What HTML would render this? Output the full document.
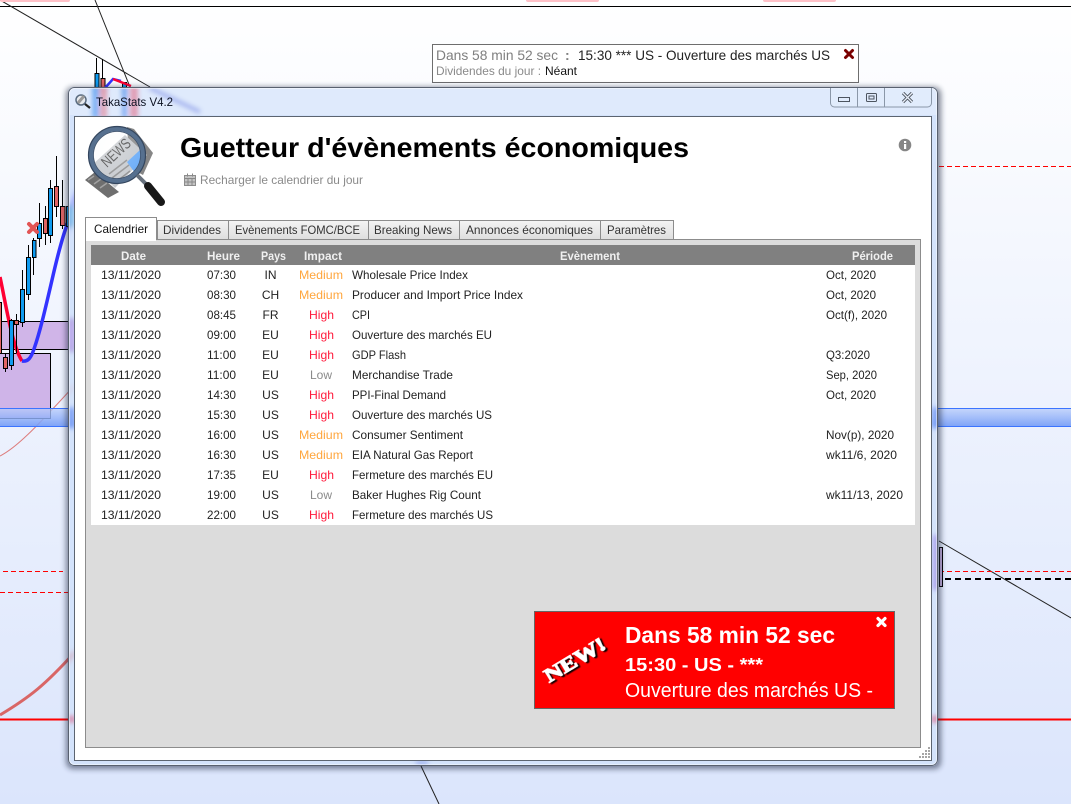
<!DOCTYPE html>
<html><head><meta charset="utf-8"><title>TakaStats V4.2</title>
<style>
html,body{margin:0;padding:0;width:1071px;height:804px;overflow:hidden;background:#fff}
svg{display:block}
text{font-family:"Liberation Sans",sans-serif;font-size:12px;fill:#222}
.h text{fill:#f0f0f0;font-weight:bold}
.t text{fill:#333}
.p{text-anchor:middle}
.m{fill:#ffa63d !important}.g{fill:#ff1a3c !important}.l{fill:#8a8a8a !important}
</style></head><body>
<svg width="1071" height="804" viewBox="0 0 1071 804" xmlns="http://www.w3.org/2000/svg">
<defs>
<linearGradient id="bg" x1="0" y1="0" x2="0" y2="1"><stop offset="0" stop-color="#ffffff"/><stop offset="1" stop-color="#dbe5fc"/></linearGradient>
<linearGradient id="band" x1="0" y1="0" x2="0" y2="1"><stop offset="0" stop-color="#b9cdfb" stop-opacity=".75"/><stop offset="1" stop-color="#6f98f6" stop-opacity=".9"/></linearGradient>
<linearGradient id="tab" x1="0" y1="0" x2="0" y2="1"><stop offset="0" stop-color="#f4f4f4"/><stop offset="1" stop-color="#dedede"/></linearGradient>
<radialGradient id="lens" cx=".4" cy=".35" r=".8"><stop offset="0" stop-color="#fff" stop-opacity=".3"/><stop offset="1" stop-color="#dfe8f0" stop-opacity=".05"/></radialGradient>
<filter id="b" x="-10%" y="-10%" width="120%" height="120%"><feGaussianBlur stdDeviation="3"/></filter>
<filter id="b2" x="-100%" y="-50%" width="300%" height="200%"><feGaussianBlur stdDeviation="2.500"/></filter>
<filter id="s" x="-5%" y="-5%" width="110%" height="110%"><feGaussianBlur stdDeviation="3"/></filter>
<filter id="n" x="-20%" y="-20%" width="140%" height="140%"><feDropShadow dx="1.500" dy="2" stdDeviation="0.400" flood-color="#000"/></filter>
<clipPath id="frame"><path fill-rule="evenodd" clip-rule="evenodd" d="M68 93a6 6 0 0 1 6-6H932a6 6 0 0 1 6 6V760a6 6 0 0 1-6 6H74a6 6 0 0 1-6-6ZM74 116V760H932V116Z"/></clipPath>
<g id="chart">
<path d="M0 6.500H1071" stroke="#000"/>
<path d="M0 0L150 87M95 0L130 87M421 766L439 804M939 541L1071 618" stroke="#222" fill="none"/>
<path d="M939 166.500H1071M939 571.500H1071M3 571.500H63M0 592.500H68" stroke="#f00" stroke-dasharray="5 3" fill="none"/>
<path d="M945 579H1071" stroke="#000" stroke-width="2" stroke-dasharray="6 4" fill="none"/>
<rect x="939.500" y="547.500" width="3" height="39" fill="#cdb5e6" stroke="#000"/>
<path d="M0 719.500H1071" stroke="#f00" stroke-width="2" fill="none"/>
<path d="M0 456C20 446 45 417 75 385" stroke="#dd7c7c" fill="none"/>
<path d="M0 715C30 697 45 685 75 652" stroke="#d96666" stroke-width="3" fill="none"/>
<rect x="-1" y="321.500" width="80" height="28" fill="#d0b5e8" stroke="#000"/>
<rect x="-1" y="353.500" width="51.500" height="65" fill="#cfb4e8" stroke="#000"/>
<rect x="0" y="408" width="1071" height="19" fill="url(#band)"/>
<path d="M0 408.500H1071M0 426.500H1071" stroke="#3b74ff" fill="none"/>
<path d="M0 277C6 305 12 345 22 361" stroke="#ff0033" stroke-width="3.500" fill="none"/>
<path d="M22 361C28 362 31 358 34 349C40 332 45 310 52 280C57 258 62 238 68 222C72 205 76 195 80 190" stroke="#3333ff" stroke-width="3.500" fill="none"/>
<path d="M22.500 270V327M28.500 245V300M33.500 238V275M39.500 203V247M45.500 206V245M50.500 180V243M56.500 156V217M62.500 180V229M5.500 353V372M11.500 319V370M16.500 314V353M96.500 58V87M102.500 59V87" stroke="#000" fill="none"/>
<g stroke="#000"><g fill="#0f9bf0"><rect x="20.500" y="289.500" width="4" height="33"/><rect x="26.500" y="257.500" width="4" height="37"/><rect x="32.500" y="240.500" width="3.500" height="17"/><rect x="37.500" y="223.500" width="4" height="15"/><rect x="48.500" y="188.500" width="4" height="47"/><rect x="66.500" y="206.500" width="6" height="20"/><rect x="9.500" y="320.500" width="4" height="45"/><rect x="95" y="73.500" width="4" height="20"/><rect x="122.500" y="82.500" width="4" height="12"/></g>
<g fill="#e16464"><rect x="43.500" y="218.500" width="4" height="15"/><rect x="54.500" y="186.500" width="4" height="20"/><rect x="60.500" y="206.500" width="4.500" height="19"/><rect x="-1" y="302.500" width="2.500" height="51"/><rect x="14.500" y="320.500" width="4" height="4"/><rect x="3.500" y="357.500" width="4" height="11"/><rect x="101" y="78.500" width="4" height="15"/></g></g>
<path d="M29 224L37 232M37 224L29 232" stroke="#e25555" stroke-width="4" stroke-linecap="round"/>
<path d="M105 88L113 79L121 81" stroke="#3333ff" stroke-width="2.500" fill="none"/><path d="M113 79L131 86" stroke="#ff0033" stroke-width="2.500" fill="none"/>
<g fill="#ffc2c8"><rect x="0" y="-3" width="70" height="5" rx="2"/><rect x="526" y="-3" width="73" height="5" rx="2"/><rect x="763" y="-3" width="73" height="5" rx="2"/></g>
</g>
</defs>

<rect width="1071" height="804" fill="url(#bg)"/>
<use href="#chart"/>

<!-- notification top -->
<rect x="432.500" y="44.500" width="426" height="38" fill="#fff" stroke="#6e6e6e"/>
<text x="436" y="60" textLength="122" lengthAdjust="spacingAndGlyphs" style="font-size:14px;fill:#7f7f7f">Dans 58 min 52 sec</text>
<text x="565" y="60" style="font-size:14px;fill:#7f7f7f;font-weight:bold">:</text>
<text x="578" y="60" textLength="252" lengthAdjust="spacingAndGlyphs" style="font-size:14px;fill:#222">15:30 *** US - Ouverture des marchés US</text>
<text x="436" y="75" textLength="105" lengthAdjust="spacingAndGlyphs" style="fill:#8a8a8a">Dividendes du jour :</text>
<text x="545" y="75" textLength="32" lengthAdjust="spacingAndGlyphs" style="fill:#111">Néant</text>
<path d="M845.500 50.500L852.500 57.500M852.500 50.500L845.500 57.500" stroke="#7a0000" stroke-width="3" stroke-linecap="round"/>

<!-- window shadow -->
<rect x="66" y="87" width="875" height="682" rx="7" fill="#1a2540" opacity=".55" filter="url(#s)"/>
<!-- glass frame -->
<rect x="68" y="87" width="870" height="679" rx="6" fill="#dfeafc"/>
<g clip-path="url(#frame)">
<g filter="url(#b)"><use href="#chart"/></g>
<rect x="60" y="80" width="890" height="700" fill="#c9dcfa" opacity=".5"/>
<rect x="60" y="88" width="890" height="27" fill="#e6effd" opacity=".6"/>
<g filter="url(#b2)" opacity=".6">
<rect x="92" y="86" width="7" height="32" fill="#3f8ff0"/><rect x="100" y="86" width="7" height="32" fill="#e27a8c"/>
<rect x="122" y="86" width="5" height="32" fill="#4a86ee"/><rect x="130" y="86" width="8" height="32" fill="#e26a85"/>
<path d="M150 88L200 112" stroke="#7d8fe6" stroke-width="4"/>
<rect x="933" y="535" width="5" height="55" fill="#8e74e6"/>
<rect x="69" y="318" width="5" height="34" fill="#a98fe6"/>
<rect x="69" y="408" width="5" height="20" fill="#4d7df2"/>
<rect x="933" y="408" width="5" height="20" fill="#4d7df2"/>
<rect x="69" y="716" width="5" height="6" fill="#d9689a"/>
<rect x="933" y="716" width="5" height="6" fill="#d9689a"/>
<rect x="416" y="760" width="12" height="6" fill="#8fa4f0"/>
</g></g>
<rect x="68.500" y="87.500" width="869" height="678" rx="6" fill="none" stroke="#59616f"/>
<rect x="69.500" y="88.500" width="867" height="676" rx="5" fill="none" stroke="#fff" stroke-opacity=".45"/>

<!-- window buttons -->
<path d="M830.500 88V103a4 4 0 0 0 4 4H927.500a4 4 0 0 0 4-4V88M857.500 88V107M884.500 88V107" fill="#e2ecfb" fill-opacity=".6" stroke="#8a97a8"/>
<rect x="838.500" y="97.500" width="11" height="4" fill="none" stroke="#4d5560"/>
<rect x="866.500" y="93.500" width="10" height="8" rx="1" fill="none" stroke="#4d5560"/><rect x="869" y="96" width="5" height="3" fill="none" stroke="#4d5560"/>
<path d="M903 93L912 102M912 93L903 102" stroke="#4d5560" stroke-width="3.200"/><path d="M903 93L912 102M912 93L903 102" stroke="#e8eef8" stroke-width="1.300"/>

<!-- title icon -->
<circle cx="81" cy="100" r="5" fill="#e8eaee" stroke="#596b80" stroke-width="1.500"/><path d="M78 103L84 96" stroke="#999" stroke-width="3"/><path d="M85 104L90 108" stroke="#222" stroke-width="2.200"/>
<text x="96" y="106" textLength="77" lengthAdjust="spacingAndGlyphs" style="fill:#0a1020">TakaStats V4.2</text>

<!-- client -->
<rect x="74.500" y="116.500" width="857" height="644" fill="#fff" stroke="#5c6470"/>

<!-- news icon -->
<path d="M85 180L95 172L119 192L108 198Z" fill="#6f6f6f"/>
<path d="M88 180L94 176M94 184L101 179M100 188L107 183" stroke="#a2a2a2" stroke-width="1.500" fill="none"/>
<path d="M127 127L134 129L153 153L143 175L130 168Z" fill="#868686"/>
<path d="M92 165L125 135L147 155L115 188Z" fill="#c6c9cd"/>
<path d="M127 162L140 150L145 157L135 173Z" fill="#62a8f8"/>
<path d="M109 174L127 160M112 178L129 165M116 182L130 171" stroke="#8c8c8c" stroke-width="1.500" fill="none"/>
<text x="0" y="0" transform="translate(107,168) rotate(-43)" textLength="34" lengthAdjust="spacingAndGlyphs" style="font-size:15px;fill:#3e3e3e">NEWS</text>
<circle cx="117" cy="155" r="26" fill="url(#lens)" stroke="#56708f" stroke-width="4.500"/>
<circle cx="117" cy="155" r="28.500" fill="none" stroke="#34465e" stroke-width="1.200"/>
<circle cx="117" cy="155" r="23.500" fill="none" stroke="#3d5069" stroke-width=".8"/>
<path d="M137 175L146 184" stroke="#66707c" stroke-width="4"/>
<path d="M148 186L161 202" stroke="#181818" stroke-width="8" stroke-linecap="round"/>

<text x="180" y="157" textLength="509" lengthAdjust="spacingAndGlyphs" style="font-size:28px;font-weight:bold;fill:#000">Guetteur d'évènements économiques</text>
<rect x="184.500" y="175.500" width="11" height="10" fill="#c4c4c4" stroke="#8c8c8c"/><path d="M184.500 178.500H195.500M188 178V186M192 178V186M185 182H195" stroke="#888" fill="none"/><path d="M187.500 173.500V176.500M192.500 173.500V176.500" stroke="#888"/>
<text x="200" y="184" textLength="163" lengthAdjust="spacingAndGlyphs" style="fill:#8a8a8a">Recharger le calendrier du jour</text>
<circle cx="905" cy="145" r="6.300" fill="#868686"/><rect x="904" y="144" width="2.200" height="5" fill="#fff"/><rect x="904" y="141" width="2.200" height="2" fill="#fff"/>

<!-- tabs -->
<rect x="85.500" y="239.500" width="835" height="508" fill="#dcdcdc" stroke="#8c8c8c"/>
<g fill="url(#tab)" stroke="#8c8c8c">
<rect x="157.500" y="220.500" width="71" height="19"/><rect x="228.500" y="220.500" width="140" height="19"/><rect x="368.500" y="220.500" width="91" height="19"/><rect x="459.500" y="220.500" width="141" height="19"/><rect x="600.500" y="220.500" width="73" height="19"/>
</g>
<path d="M85.500 240V217.500H156.500V240" fill="#fff" stroke="#8c8c8c"/>
<rect x="86" y="236" width="70" height="5" fill="#fff"/>
<text x="94" y="233" textLength="54" lengthAdjust="spacingAndGlyphs" style="fill:#111">Calendrier</text>
<g class="t">
<text x="163" y="234" textLength="58" lengthAdjust="spacingAndGlyphs">Dividendes</text>
<text x="235" y="234" textLength="125" lengthAdjust="spacingAndGlyphs">Evènements FOMC/BCE</text>
<text x="374" y="234" textLength="78" lengthAdjust="spacingAndGlyphs">Breaking News</text>
<text x="466" y="234" textLength="127" lengthAdjust="spacingAndGlyphs">Annonces économiques</text>
<text x="607" y="234" textLength="59" lengthAdjust="spacingAndGlyphs">Paramètres</text>
</g>

<!-- table -->
<rect x="91" y="245" width="824" height="280" fill="#fff"/>
<rect x="91" y="245" width="824" height="20" fill="#808080"/>
<g class="h">
<text x="121" y="260" textLength="25" lengthAdjust="spacingAndGlyphs">Date</text>
<text x="207" y="260" textLength="33" lengthAdjust="spacingAndGlyphs">Heure</text>
<text x="261" y="260" textLength="25" lengthAdjust="spacingAndGlyphs">Pays</text>
<text x="304" y="260" textLength="38" lengthAdjust="spacingAndGlyphs">Impact</text>
<text x="560" y="260" textLength="60" lengthAdjust="spacingAndGlyphs">Evènement</text>
<text x="852" y="260" textLength="41" lengthAdjust="spacingAndGlyphs">Période</text>
</g>
<g>
<g><text x="101" y="279" textLength="60" lengthAdjust="spacingAndGlyphs">13/11/2020</text><text x="207" y="279" textLength="29" lengthAdjust="spacingAndGlyphs">07:30</text><text class="p" x="270.500" y="279">IN</text><text class="m" x="299" y="279" textLength="44" lengthAdjust="spacingAndGlyphs">Medium</text><text x="352" y="279" textLength="116" lengthAdjust="spacingAndGlyphs">Wholesale Price Index</text><text x="826" y="279" textLength="50" lengthAdjust="spacingAndGlyphs">Oct, 2020</text></g>
<g><text x="101" y="299" textLength="60" lengthAdjust="spacingAndGlyphs">13/11/2020</text><text x="207" y="299" textLength="29" lengthAdjust="spacingAndGlyphs">08:30</text><text class="p" x="270.500" y="299">CH</text><text class="m" x="299" y="299" textLength="44" lengthAdjust="spacingAndGlyphs">Medium</text><text x="352" y="299" textLength="171" lengthAdjust="spacingAndGlyphs">Producer and Import Price Index</text><text x="826" y="299" textLength="50" lengthAdjust="spacingAndGlyphs">Oct, 2020</text></g>
<g><text x="101" y="319" textLength="60" lengthAdjust="spacingAndGlyphs">13/11/2020</text><text x="207" y="319" textLength="29" lengthAdjust="spacingAndGlyphs">08:45</text><text class="p" x="270.500" y="319">FR</text><text class="g" x="309" y="319" textLength="25" lengthAdjust="spacingAndGlyphs">High</text><text x="352" y="319" textLength="18" lengthAdjust="spacingAndGlyphs">CPI</text><text x="826" y="319" textLength="61" lengthAdjust="spacingAndGlyphs">Oct(f), 2020</text></g>
<g><text x="101" y="339" textLength="60" lengthAdjust="spacingAndGlyphs">13/11/2020</text><text x="207" y="339" textLength="29" lengthAdjust="spacingAndGlyphs">09:00</text><text class="p" x="270.500" y="339">EU</text><text class="g" x="309" y="339" textLength="25" lengthAdjust="spacingAndGlyphs">High</text><text x="352" y="339" textLength="140" lengthAdjust="spacingAndGlyphs">Ouverture des marchés EU</text></g>
<g><text x="101" y="359" textLength="60" lengthAdjust="spacingAndGlyphs">13/11/2020</text><text x="207" y="359" textLength="29" lengthAdjust="spacingAndGlyphs">11:00</text><text class="p" x="270.500" y="359">EU</text><text class="g" x="309" y="359" textLength="25" lengthAdjust="spacingAndGlyphs">High</text><text x="352" y="359" textLength="54" lengthAdjust="spacingAndGlyphs">GDP Flash</text><text x="826" y="359" textLength="44" lengthAdjust="spacingAndGlyphs">Q3:2020</text></g>
<g><text x="101" y="379" textLength="60" lengthAdjust="spacingAndGlyphs">13/11/2020</text><text x="207" y="379" textLength="29" lengthAdjust="spacingAndGlyphs">11:00</text><text class="p" x="270.500" y="379">EU</text><text class="l" x="310" y="379" textLength="22" lengthAdjust="spacingAndGlyphs">Low</text><text x="352" y="379" textLength="101" lengthAdjust="spacingAndGlyphs">Merchandise Trade</text><text x="826" y="379" textLength="51" lengthAdjust="spacingAndGlyphs">Sep, 2020</text></g>
<g><text x="101" y="399" textLength="60" lengthAdjust="spacingAndGlyphs">13/11/2020</text><text x="207" y="399" textLength="29" lengthAdjust="spacingAndGlyphs">14:30</text><text class="p" x="270.500" y="399">US</text><text class="g" x="309" y="399" textLength="25" lengthAdjust="spacingAndGlyphs">High</text><text x="352" y="399" textLength="94" lengthAdjust="spacingAndGlyphs">PPI-Final Demand</text><text x="826" y="399" textLength="50" lengthAdjust="spacingAndGlyphs">Oct, 2020</text></g>
<g><text x="101" y="419" textLength="60" lengthAdjust="spacingAndGlyphs">13/11/2020</text><text x="207" y="419" textLength="29" lengthAdjust="spacingAndGlyphs">15:30</text><text class="p" x="270.500" y="419">US</text><text class="g" x="309" y="419" textLength="25" lengthAdjust="spacingAndGlyphs">High</text><text x="352" y="419" textLength="140" lengthAdjust="spacingAndGlyphs">Ouverture des marchés US</text></g>
<g><text x="101" y="439" textLength="60" lengthAdjust="spacingAndGlyphs">13/11/2020</text><text x="207" y="439" textLength="29" lengthAdjust="spacingAndGlyphs">16:00</text><text class="p" x="270.500" y="439">US</text><text class="m" x="299" y="439" textLength="44" lengthAdjust="spacingAndGlyphs">Medium</text><text x="352" y="439" textLength="111" lengthAdjust="spacingAndGlyphs">Consumer Sentiment</text><text x="826" y="439" textLength="68" lengthAdjust="spacingAndGlyphs">Nov(p), 2020</text></g>
<g><text x="101" y="459" textLength="60" lengthAdjust="spacingAndGlyphs">13/11/2020</text><text x="207" y="459" textLength="29" lengthAdjust="spacingAndGlyphs">16:30</text><text class="p" x="270.500" y="459">US</text><text class="m" x="299" y="459" textLength="44" lengthAdjust="spacingAndGlyphs">Medium</text><text x="352" y="459" textLength="121" lengthAdjust="spacingAndGlyphs">EIA Natural Gas Report</text><text x="826" y="459" textLength="71" lengthAdjust="spacingAndGlyphs">wk11/6, 2020</text></g>
<g><text x="101" y="479" textLength="60" lengthAdjust="spacingAndGlyphs">13/11/2020</text><text x="207" y="479" textLength="29" lengthAdjust="spacingAndGlyphs">17:35</text><text class="p" x="270.500" y="479">EU</text><text class="g" x="309" y="479" textLength="25" lengthAdjust="spacingAndGlyphs">High</text><text x="352" y="479" textLength="141" lengthAdjust="spacingAndGlyphs">Fermeture des marchés EU</text></g>
<g><text x="101" y="499" textLength="60" lengthAdjust="spacingAndGlyphs">13/11/2020</text><text x="207" y="499" textLength="29" lengthAdjust="spacingAndGlyphs">19:00</text><text class="p" x="270.500" y="499">US</text><text class="l" x="310" y="499" textLength="22" lengthAdjust="spacingAndGlyphs">Low</text><text x="352" y="499" textLength="129" lengthAdjust="spacingAndGlyphs">Baker Hughes Rig Count</text><text x="826" y="499" textLength="77" lengthAdjust="spacingAndGlyphs">wk11/13, 2020</text></g>
<g><text x="101" y="519" textLength="60" lengthAdjust="spacingAndGlyphs">13/11/2020</text><text x="207" y="519" textLength="29" lengthAdjust="spacingAndGlyphs">22:00</text><text class="p" x="270.500" y="519">US</text><text class="g" x="309" y="519" textLength="25" lengthAdjust="spacingAndGlyphs">High</text><text x="352" y="519" textLength="141" lengthAdjust="spacingAndGlyphs">Fermeture des marchés US</text></g>
</g>

<!-- red toast -->
<rect x="534.500" y="611.500" width="360" height="97" fill="#f00" stroke="#666"/>
<text x="0" y="0" transform="translate(549,683) rotate(-31)" textLength="68" lengthAdjust="spacingAndGlyphs" filter="url(#n)" style="font-family:'Liberation Serif',serif;font-size:20px;font-weight:bold;fill:#fff;stroke:#fff;stroke-width:1">NEW!</text>
<text x="625" y="643" textLength="210" lengthAdjust="spacingAndGlyphs" style="font-size:23px;font-weight:bold;fill:#fff">Dans 58 min 52 sec</text>
<text x="625" y="671" textLength="138" lengthAdjust="spacingAndGlyphs" style="font-size:18px;font-weight:bold;fill:#fff">15:30 - US - ***</text>
<text x="625" y="697" textLength="248" lengthAdjust="spacingAndGlyphs" style="font-size:20px;fill:#fff">Ouverture des marchés US -</text>
<path d="M878 618.500L885 625.500M885 618.500L878 625.500" stroke="#fff" stroke-width="3.200" stroke-linecap="round"/>

<!-- grip -->
<g fill="#a5a5a5"><rect x="928" y="747" width="2" height="2"/><rect x="925" y="750" width="2" height="2"/><rect x="928" y="750" width="2" height="2"/><rect x="922" y="753" width="2" height="2"/><rect x="925" y="753" width="2" height="2"/><rect x="928" y="753" width="2" height="2"/><rect x="919" y="756" width="2" height="2"/><rect x="922" y="756" width="2" height="2"/><rect x="925" y="756" width="2" height="2"/><rect x="928" y="756" width="2" height="2"/></g>
</svg>
</body></html>
